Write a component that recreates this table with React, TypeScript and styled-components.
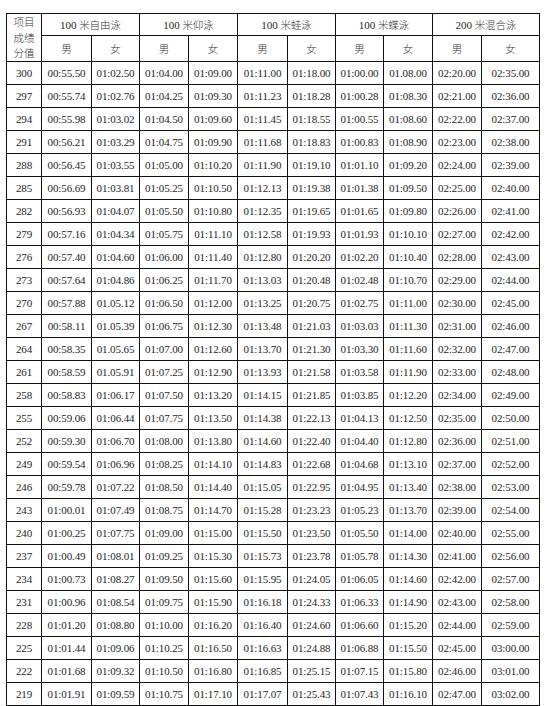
import React from 'react'
import styled, { createGlobalStyle } from 'styled-components'

const GlobalStyle = createGlobalStyle`
  html, body {
    margin: 0;
    padding: 0;
    background: #fff;
  }
  body {
    font-family: "Liberation Serif", "Noto Sans CJK SC", serif;
    color: #1e1e1e;
  }
`

const Page = styled.div`
  padding: 13px 0 0 6px;
  width: 547px;
  box-sizing: border-box;
`

const Table = styled.table`
  border-collapse: collapse;
  table-layout: fixed;
  width: 533px;
  font-size: 11px;
  line-height: 13px;
`

const HeadCell = styled.th<{ $h?: number }>`
  border: 1px solid #111;
  padding: 0;
  height: ${p => p.$h ?? 22}px;
  font-weight: normal;
  text-align: center;
  vertical-align: middle;
  font-size: 11px;
  white-space: nowrap;
`

const CornerLine = styled.div`
  font-family: "Noto Sans CJK SC", sans-serif;
  font-size: 10.5px;
  font-weight: 300;
  line-height: 15.5px;
  color: #333;
`

const Cn = styled.span`
  font-family: "Noto Sans CJK SC", sans-serif;
  font-size: 10.5px;
  font-weight: 300;
  line-height: 13px;
  color: #333;
`

const Cell = styled.td`
  border: 1px solid #111;
  padding: 0;
  height: 22px;
  text-align: center;
  vertical-align: middle;
  white-space: nowrap;
  letter-spacing: -0.1px;
`

const widths = [35, 50, 48, 49, 49, 50, 48, 48, 49, 49, 58]

const events = ['100 米自由泳', '100 米仰泳', '100 米蛙泳', '100 米蝶泳', '200 米混合泳']

const rows: string[][] = [
  ['300', '00:55.50', '01:02.50', '01:04.00', '01:09.00', '01:11.00', '01:18.00', '01:00.00', '01.08.00', '02:20.00', '02:35.00'],
  ['297', '00:55.74', '01:02.76', '01:04.25', '01:09.30', '01:11.23', '01:18.28', '01:00.28', '01:08.30', '02:21.00', '02:36.00'],
  ['294', '00:55.98', '01:03.02', '01:04.50', '01:09.60', '01:11.45', '01:18.55', '01:00.55', '01:08.60', '02:22.00', '02:37.00'],
  ['291', '00:56.21', '01:03.29', '01:04.75', '01:09.90', '01:11.68', '01:18.83', '01:00.83', '01:08.90', '02:23.00', '02:38.00'],
  ['288', '00:56.45', '01:03.55', '01:05.00', '01:10.20', '01:11.90', '01:19.10', '01:01.10', '01:09.20', '02:24.00', '02:39.00'],
  ['285', '00:56.69', '01:03.81', '01:05.25', '01:10.50', '01:12.13', '01:19.38', '01:01.38', '01:09.50', '02:25.00', '02:40.00'],
  ['282', '00:56.93', '01:04.07', '01:05.50', '01:10.80', '01:12.35', '01:19.65', '01:01.65', '01:09.80', '02:26.00', '02:41.00'],
  ['279', '00:57.16', '01:04.34', '01:05.75', '01:11.10', '01:12.58', '01:19.93', '01:01.93', '01:10.10', '02:27.00', '02:42.00'],
  ['276', '00:57.40', '01:04.60', '01:06.00', '01:11.40', '01:12.80', '01:20.20', '01:02.20', '01:10.40', '02:28.00', '02:43.00'],
  ['273', '00:57.64', '01:04.86', '01:06.25', '01:11.70', '01:13.03', '01:20.48', '01:02.48', '01:10.70', '02:29.00', '02:44.00'],
  ['270', '00:57.88', '01.05.12', '01:06.50', '01:12.00', '01:13.25', '01:20.75', '01:02.75', '01:11.00', '02:30.00', '02:45.00'],
  ['267', '00:58.11', '01.05.39', '01:06.75', '01:12.30', '01:13.48', '01:21.03', '01:03.03', '01:11.30', '02:31.00', '02:46.00'],
  ['264', '00:58.35', '01.05.65', '01:07.00', '01:12.60', '01:13.70', '01:21.30', '01:03.30', '01:11.60', '02:32.00', '02:47.00'],
  ['261', '00:58.59', '01.05.91', '01:07.25', '01:12.90', '01:13.93', '01:21.58', '01:03.58', '01:11.90', '02:33.00', '02:48.00'],
  ['258', '00:58.83', '01:06.17', '01:07.50', '01:13.20', '01:14.15', '01:21.85', '01:03.85', '01:12.20', '02:34.00', '02:49.00'],
  ['255', '00:59.06', '01:06.44', '01:07.75', '01:13.50', '01:14.38', '01:22.13', '01:04.13', '01:12.50', '02:35.00', '02:50.00'],
  ['252', '00:59.30', '01:06.70', '01:08.00', '01:13.80', '01:14.60', '01:22.40', '01:04.40', '01:12.80', '02:36.00', '02:51.00'],
  ['249', '00:59.54', '01:06.96', '01:08.25', '01:14.10', '01:14.83', '01:22.68', '01:04.68', '01:13.10', '02:37.00', '02:52.00'],
  ['246', '00:59.78', '01:07.22', '01:08.50', '01:14.40', '01:15.05', '01:22.95', '01:04.95', '01:13.40', '02:38.00', '02:53.00'],
  ['243', '01:00.01', '01:07.49', '01:08.75', '01:14.70', '01:15.28', '01:23.23', '01:05.23', '01:13.70', '02:39.00', '02:54.00'],
  ['240', '01:00.25', '01:07.75', '01:09.00', '01:15.00', '01:15.50', '01:23.50', '01:05.50', '01:14.00', '02:40.00', '02:55.00'],
  ['237', '01:00.49', '01:08.01', '01:09.25', '01:15.30', '01:15.73', '01:23.78', '01:05.78', '01:14.30', '02:41.00', '02:56.00'],
  ['234', '01:00.73', '01:08.27', '01:09.50', '01:15.60', '01:15.95', '01:24.05', '01:06.05', '01:14.60', '02:42.00', '02:57.00'],
  ['231', '01:00.96', '01:08.54', '01:09.75', '01:15.90', '01:16.18', '01:24.33', '01:06.33', '01:14.90', '02:43.00', '02:58.00'],
  ['228', '01:01.20', '01:08.80', '01:10.00', '01:16.20', '01:16.40', '01:24.60', '01:06.60', '01:15.20', '02:44.00', '02:59.00'],
  ['225', '01:01.44', '01:09.06', '01:10.25', '01:16.50', '01:16.63', '01:24.88', '01:06.88', '01:15.50', '02:45.00', '03:00.00'],
  ['222', '01:01.68', '01:09.32', '01:10.50', '01:16.80', '01:16.85', '01:25.15', '01:07.15', '01:15.80', '02:46.00', '03:01.00'],
  ['219', '01:01.91', '01:09.59', '01:10.75', '01:17.10', '01:17.07', '01:25.43', '01:07.43', '01:16.10', '02:47.00', '03:02.00'],
]

// splits "100 米自由泳" into the number part and the Chinese part
const EventTitle = ({ title }: { title: string }) => {
  const [num, name] = title.split(' ')
  return (
    <>
      {num} <Cn>{name}</Cn>
    </>
  )
}

export default function App() {
  return (
    <Page>
      <GlobalStyle />
      <Table>
        <colgroup>
          {widths.map((w, i) => (
            <col key={i} style={{ width: w }} />
          ))}
        </colgroup>
        <thead>
          <tr>
            <HeadCell rowSpan={2} $h={21}>
              <CornerLine>项目</CornerLine>
              <CornerLine>成绩</CornerLine>
              <CornerLine>分值</CornerLine>
            </HeadCell>
            {events.map(e => (
              <HeadCell key={e} colSpan={2} $h={21}>
                <EventTitle title={e} />
              </HeadCell>
            ))}
          </tr>
          <tr>
            {events.map(e => (
              <React.Fragment key={e}>
                <HeadCell $h={25}>
                  <Cn>男</Cn>
                </HeadCell>
                <HeadCell $h={25}>
                  <Cn>女</Cn>
                </HeadCell>
              </React.Fragment>
            ))}
          </tr>
        </thead>
        <tbody>
          {rows.map(r => (
            <tr key={r[0]}>
              {r.map((v, i) => (
                <Cell key={i}>{v}</Cell>
              ))}
            </tr>
          ))}
        </tbody>
      </Table>
    </Page>
  )
}
